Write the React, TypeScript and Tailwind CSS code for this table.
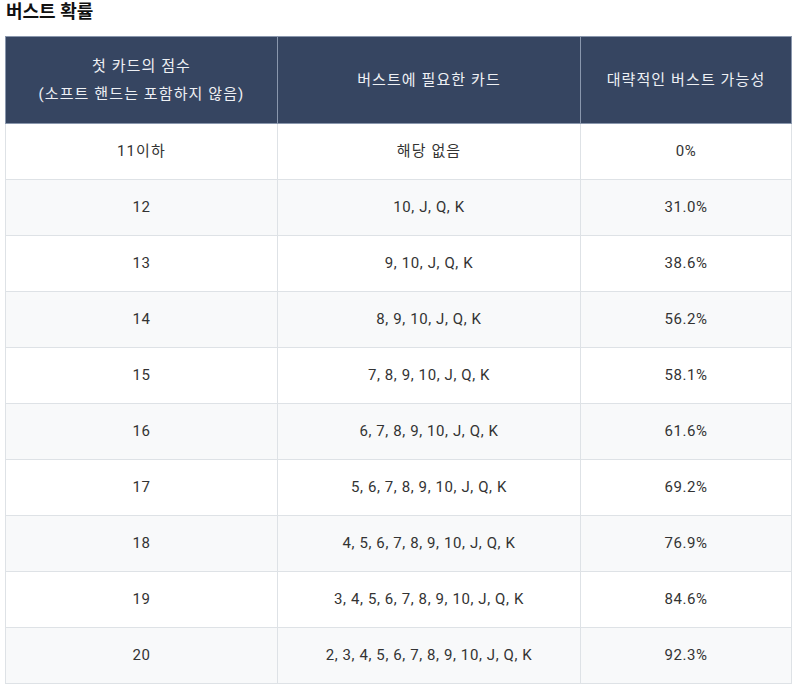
import React from "react";

const rows: [string, string, string][] = [
  ["11이하", "해당 없음", "0%"],
  ["12", "10, J, Q, K", "31.0%"],
  ["13", "9, 10, J, Q, K", "38.6%"],
  ["14", "8, 9, 10, J, Q, K", "56.2%"],
  ["15", "7, 8, 9, 10, J, Q, K", "58.1%"],
  ["16", "6, 7, 8, 9, 10, J, Q, K", "61.6%"],
  ["17", "5, 6, 7, 8, 9, 10, J, Q, K", "69.2%"],
  ["18", "4, 5, 6, 7, 8, 9, 10, J, Q, K", "76.9%"],
  ["19", "3, 4, 5, 6, 7, 8, 9, 10, J, Q, K", "84.6%"],
  ["20", "2, 3, 4, 5, 6, 7, 8, 9, 10, J, Q, K", "92.3%"],
];

export default function App() {
  return (
    <div
      className="bg-white w-[800px] h-[693px] overflow-hidden"
      style={{ fontFamily: "Roboto, 'Noto Sans CJK KR', sans-serif" }}
    >
      <h2 className="pl-[6px] pt-0 text-[18px] leading-[24px] font-bold text-[#111]">
        버스트 확률
      </h2>
      <table className="ml-[5px] mt-[12px] w-[786px] border-collapse text-[15px] tracking-[0.6px] text-[#333] table-fixed">
        <colgroup>
          <col className="w-[272px]" />
          <col className="w-[303px]" />
          <col className="w-[211px]" />
        </colgroup>
        <thead>
          <tr className="h-[87px] bg-[#364561] text-[#eef0f4] tracking-[1.1px]">
            <th className="font-normal border border-[#8a97ad] leading-[28px] text-center">
              첫 카드의 점수
              <br />
              (소프트 핸드는 포함하지 않음)
            </th>
            <th className="font-normal border border-[#8a97ad] text-center">버스트에 필요한 카드</th>
            <th className="font-normal border border-[#8a97ad] text-center">대략적인 버스트 가능성</th>
          </tr>
        </thead>
        <tbody>
          {rows.map((r, i) => (
            <tr key={i} className={`h-[56px] ${i % 2 === 1 ? "bg-[#f8f9fa]" : "bg-white"}`}>
              {r.map((c, j) => (
                <td
                  key={j}
                  className={`border border-[#dee2e6] text-center ${i === 0 && j < 2 ? "tracking-[1.1px]" : ""}`}
                >
                  {c}
                </td>
              ))}
            </tr>
          ))}
        </tbody>
      </table>
    </div>
  );
}
